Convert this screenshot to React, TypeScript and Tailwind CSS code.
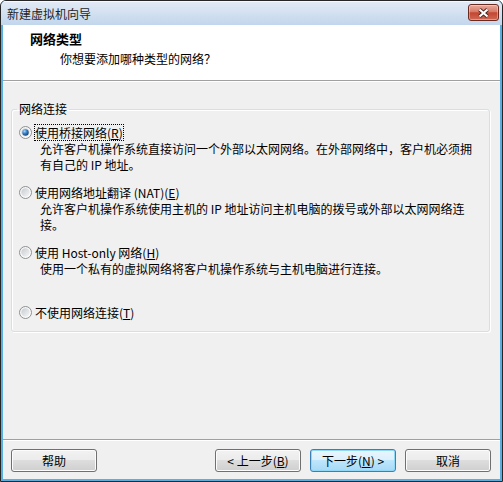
import React from 'react';

const FONT = "font-['Noto_Sans_CJK_SC','Noto_Sans',sans-serif]";

type Option = {
  label: React.ReactNode;
  desc: React.ReactNode;
  checked?: boolean;
};

const OPTIONS: Option[] = [
  {
    label: (
      <>
        使用桥接网络(<u>R</u>)
      </>
    ),
    desc: (
      <>
        允许客户机操作系统直接访问一个外部以太网网络。在外部网络中，客户机必须拥
        <br />
        有自己的 IP 地址。
      </>
    ),
    checked: true,
  },
  {
    label: (
      <>
        使用网络地址翻译 (NAT)(<u>E</u>)
      </>
    ),
    desc: (
      <>
        允许客户机操作系统使用主机的 IP 地址访问主机电脑的拨号或外部以太网网络连
        <br />
        接。
      </>
    ),
  },
  {
    label: (
      <>
        使用 Host-only 网络(<u>H</u>)
      </>
    ),
    desc: <>使用一个私有的虚拟网络将客户机操作系统与主机电脑进行连接。</>,
  },
  {
    label: (
      <>
        不使用网络连接(<u>T</u>)
      </>
    ),
    desc: null,
  },
];

export default function App() {
  return (
    <div className={`${FONT} h-[482px] w-[503px] overflow-hidden rounded-t-[6px] border border-[#262626] bg-[#5aaee0] text-[12px] text-black`}>
      {/* title bar */}
      <div className="flex h-[24px] justify-between bg-[linear-gradient(#e3ebf5,#c2d6ec)] pl-[6px] pr-[3px] shadow-[inset_0_1px_0_#f5f8fc]">
        <div className="pt-[5px] leading-[16px] text-[#1e1e1e]">新建虚拟机向导</div>
        <CloseButton />
      </div>

      <div className="mx-[2px] flex h-[454px] flex-col">
        {/* header */}
        <div className="h-[55px] bg-white pl-[27px] pt-[6px]">
          <div className="text-[13px] font-bold leading-[16px]">网络类型</div>
          <div className="mt-[4px] pl-[30px] leading-[16px]">你想要添加哪种类型的网络？</div>
        </div>
        <div className="h-px bg-[#a0a0a0]" />
        <div className="h-px bg-white" />

        {/* body */}
        <div className="flex flex-1 flex-col bg-[#f0f0f0]">
          <fieldset className="ml-[8px] mt-[19px] h-[231px] w-[479px] rounded-[3px] border border-[#d5dfe5] pl-[7px] pt-[7px] shadow-[inset_1px_1px_0_#ffffff,1px_1px_0_#ffffff]">
            <legend className="-ml-[2px] px-[2px] leading-[16px]">网络连接</legend>
            {OPTIONS.map((o, i) => (
              <OptionRow key={i} option={o} focused={i === 0} />
            ))}
          </fieldset>

          <div className="flex-1" />

          <div className="h-px bg-[#a0a0a0]" />
          <div className="h-px bg-white" />
          <div className="flex items-start pb-[7px] pl-[8px] pr-[9px] pt-[8px]">
            <WinButton>帮助</WinButton>
            <div className="flex-1" />
            <div className="flex gap-[9px]">
              <WinButton>
                &lt; 上一步(<u>B</u>)
              </WinButton>
              <WinButton primary>
                下一步(<u>N</u>) &gt;
              </WinButton>
              <WinButton>取消</WinButton>
            </div>
          </div>
        </div>
      </div>
    </div>
  );
}

/* helpers */
function OptionRow({ option, focused }: { option: Option; focused?: boolean }) {
  return (
    <div className="mb-[11px]">
      <div className="flex h-[17px] items-center">
        <Radio checked={option.checked} />
        <span
          className={`ml-[2px] flex h-[17px] items-center border border-dotted leading-[15px] ${
            focused ? 'border-black' : 'border-transparent'
          }`}
        >
          {option.label}
        </span>
      </div>
      {option.desc && (
        <div className="min-h-[32px] pl-[21px] leading-[16px]">{option.desc}</div>
      )}
    </div>
  );
}

function Radio({ checked }: { checked?: boolean }) {
  return (
    <svg width="13" height="13" viewBox="0 0 13 13" className="shrink-0">
      <defs>
        <linearGradient id="rOuter" x1="0" y1="0" x2="1" y2="1">
          <stop offset="0" stopColor="#f2f2f2" />
          <stop offset="1" stopColor="#ffffff" />
        </linearGradient>
        <linearGradient id="rInner" x1="0" y1="0" x2="1" y2="1">
          <stop offset="0" stopColor="#c6cbd1" />
          <stop offset="1" stopColor="#f7f7f7" />
        </linearGradient>
        <radialGradient id="rDot" cx="0.35" cy="0.3" r="0.75">
          <stop offset="0" stopColor="#a9dcfb" />
          <stop offset="0.45" stopColor="#3b85c9" />
          <stop offset="1" stopColor="#153f78" />
        </radialGradient>
      </defs>
      <circle cx="6.5" cy="6.5" r="6" fill="url(#rOuter)" stroke="#8e8f8f" strokeWidth="1" />
      <circle cx="6.5" cy="6.5" r="4.2" fill="url(#rInner)" />
      {checked && <circle cx="6.5" cy="6.5" r="3.2" fill="url(#rDot)" />}
    </svg>
  );
}

function CloseButton() {
  return (
    <div className="mt-[3px] flex h-[17px] w-[31px] items-center justify-center rounded-[3px] border border-[#6b2a20] bg-[linear-gradient(#eaaa9b,#d67a69_45%,#c4452f_52%,#cf6a55)] shadow-[inset_0_0_0_1px_rgba(255,255,255,0.35)]">
      <svg width="13" height="10" viewBox="0 0 13 10">
        <path d="M2.5 1.5 L10.5 8.5 M10.5 1.5 L2.5 8.5" stroke="#4a2620" strokeWidth="4" />
        <path d="M2.5 1.5 L10.5 8.5 M10.5 1.5 L2.5 8.5" stroke="#ffffff" strokeWidth="2.2" />
      </svg>
    </div>
  );
}

function WinButton({ children, primary }: { children: React.ReactNode; primary?: boolean }) {
  const skin = primary
    ? 'border-[#3c7fb1] bg-[linear-gradient(#eaf6fd,#d9f0fc_50%,#bee6fd_50%,#a7d9f5)] shadow-[inset_0_0_0_1px_#8fd8f8]'
    : 'border-[#707070] bg-[linear-gradient(#f2f2f2,#ebebeb_50%,#dddddd_50%,#cfcfcf)] shadow-[inset_0_0_0_1px_#fcfcfc]';
  return (
    <button
      type="button"
      className={`flex h-[23px] w-[86px] items-center justify-center rounded-[3px] border leading-[16px] ${skin}`}
    >
      {children}
    </button>
  );
}
